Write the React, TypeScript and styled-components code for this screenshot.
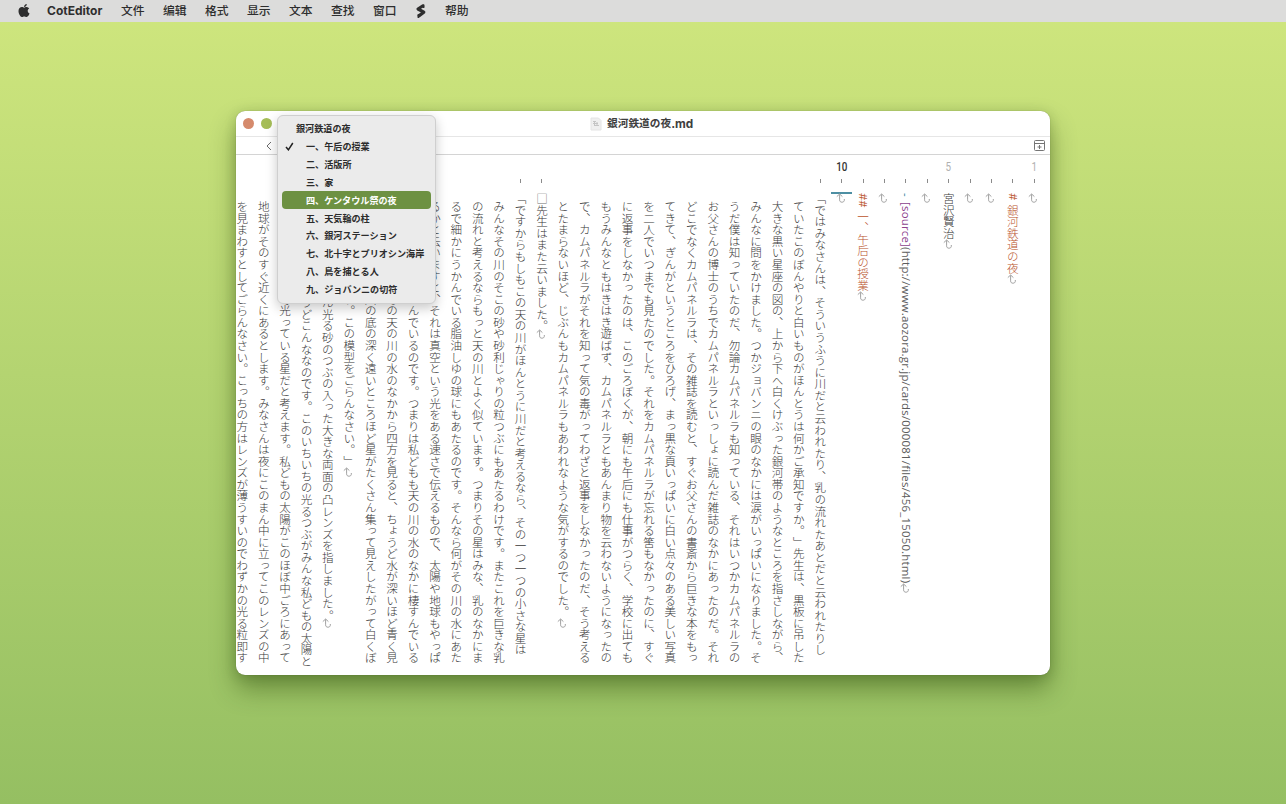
import React from 'react'
import styled, { createGlobalStyle, css } from 'styled-components'
import { FaApple } from 'react-icons/fa'

const GlobalStyle = createGlobalStyle`
  html, body, #root {
    height: 100%;
    margin: 0;
  }
  body {
    overflow: hidden;
    font-family: Inter, 'Noto Sans CJK JP', sans-serif;
    color: #2b2b2b;
  }
`

const Desktop = styled.div`
  height: 804px;
  display: flex;
  flex-direction: column;
  align-items: center;
  background: linear-gradient(#cfe67e, #95bf62);
`

const MenuBar = styled.nav`
  width: 100%;
  height: 22px;
  box-sizing: border-box;
  flex: none;
  display: flex;
  align-items: center;
  padding-left: 17px;
  background: #dcdcdb;
  font-family: Inter, 'Noto Sans CJK SC', sans-serif;
  font-size: 11.8px;
  font-weight: 500;
  color: #2e2e2e;
`

const MenuBarItem = styled.span<{ $bold?: boolean; $icon?: boolean }>`
  padding: 0 9px;
  width: 24px;
  line-height: 20px;
  white-space: nowrap;
  ${(p) =>
    p.$bold &&
    css`
      width: 56px;
      font-size: 12px;
      font-weight: 700;
    `}
  ${(p) =>
    p.$icon &&
    css`
      display: flex;
      width: 12px;
    `}
`

const AppleLogo = styled(FaApple)`
  width: 14px;
  height: 15px;
  margin-right: 7px;
  transform: translateY(-1px);
`

const Window = styled.main`
  width: 814px;
  height: 564px;
  margin-top: 89px;
  border-radius: 9px;
  background: #fff;
  box-shadow: 0 0 1px rgba(0, 0, 0, 0.35), 0 14px 26px rgba(30, 60, 0, 0.42),
    0 2px 12px rgba(30, 60, 0, 0.18);
  display: flex;
  flex-direction: column;
  position: relative;
`

const TitleBar = styled.header`
  height: 25px;
  flex: none;
  display: flex;
  align-items: center;
  padding-left: 7px;
  border-bottom: 1px solid #e6e6e6;
`

const TrafficLight = styled.span<{ $color: string }>`
  width: 11px;
  height: 11px;
  margin-right: 7px;
  border-radius: 50%;
  background: ${(p) => p.$color};
`

const Title = styled.h1`
  flex: 1;
  display: flex;
  align-items: center;
  margin: 0 0 0 311px;
  font-size: 10.7px;
  line-height: 20px;
  font-weight: 700;
  color: #3e3e3e;
  svg {
    margin-right: 5px;
  }
`

const Extension = styled.span`
  font-size: 11.8px;
`

const NavBar = styled.div`
  height: 17px;
  flex: none;
  display: flex;
  align-items: center;
  justify-content: space-between;
  padding: 0 5px 0 30px;
  border-bottom: 1px solid #d4d4d4;
`

const Editor = styled.section`
  flex: 1;
  display: flex;
  flex-direction: row-reverse;
  padding-right: 5px;
  overflow: hidden;
  border-radius: 0 0 9px 9px;
`

const Column = styled.div`
  width: 21.42px;
  flex: none;
  display: flex;
  flex-direction: column;
  align-items: center;
`

const LineNumber = styled.div<{ $active?: boolean }>`
  height: 24px;
  flex: none;
  font-family: Roboto, sans-serif;
  font-size: 12px;
  line-height: 24px;
  transform: scaleX(0.82);
  color: ${(p) => (p.$active ? '#333' : '#b0b0b0')};
  font-weight: ${(p) => (p.$active ? 500 : 400)};
`

const Tick = styled.div<{ $visible: boolean }>`
  width: 1px;
  height: 4px;
  flex: none;
  background: ${(p) => (p.$visible ? '#8b8b8b' : 'transparent')};
`

const Cursor = styled.div<{ $visible: boolean }>`
  width: 21px;
  height: 2px;
  flex: none;
  margin: 9px 0 -1px;
  background: ${(p) => (p.$visible ? '#4d8fa3' : 'transparent')};
`

const LineText = styled.div<{ $wrapped: boolean; $color?: string }>`
  flex: none;
  margin-top: ${(p) => (p.$wrapped ? 8 : 0)}px;
  writing-mode: vertical-rl;
  text-spacing-trim: space-all;
  white-space: pre;
  font-family: 'Noto Sans CJK JP', sans-serif;
  font-size: 11.57px;
  font-weight: 300;
  line-height: 10px;
  color: ${(p) => p.$color || '#383838'};
`

const Latin = styled.span<{ $color?: string; $spacing?: number }>`
  font-family: 'Open Sans', sans-serif;
  font-size: 11.4px;
  font-weight: 400;
  letter-spacing: ${(p) => p.$spacing || 0}px;
  color: ${(p) => p.$color || 'inherit'};
`

const FullWidthSpace = styled.span`
  color: #6e6e6e;
`

const ReturnIcon = styled.svg<{ $tight?: boolean }>`
  width: 10px;
  height: 10px;
  flex: none;
  margin: ${(p) => (p.$tight ? -3 : 0)}px 2px 0 0;
`

const OutlineMenu = styled.div`
  position: absolute;
  left: 41px;
  top: 4px;
  width: 149px;
  padding: 4px 4px 5px;
  border: 1px solid #cfcfcf;
  border-radius: 6px;
  background: #ebebeb;
  box-shadow: 0 4px 12px rgba(0, 0, 0, 0.22);
`

const OutlineItem = styled.div<{ $root?: boolean; $selected?: boolean }>`
  height: 17.84px;
  display: flex;
  align-items: center;
  padding-left: ${(p) => (p.$root ? 14 : 3)}px;
  border-radius: 4px;
  font-family: 'Noto Sans CJK JP', sans-serif;
  font-size: 9.1px;
  font-weight: 700;
  line-height: 17px;
  white-space: nowrap;
  text-spacing-trim: space-all;
  color: ${(p) => (p.$selected ? '#fff' : '#2c2c2c')};
  background: ${(p) => (p.$selected ? '#6d9142' : 'transparent')};
`

const CheckSlot = styled.span`
  width: 21px;
  display: flex;
`

const ReturnMark = ({ tight }: { tight?: boolean }) => (
  <ReturnIcon $tight={tight} viewBox="0 0 10 10" fill="none" stroke="#a0a0a0" strokeWidth="1">
    <path d="M.8 3.6 3.6 1l2.8 2.6M3.6 1.2v5.6c0 1.6.9 2.4 2.3 2.4s2.4-.8 2.4-1.8V6" />
  </ReturnIcon>
)

type Line = {
  text?: string
  node?: React.ReactNode
  number?: number
  wrapped?: boolean
  color?: string
  end?: boolean
}

const heading = '#b9532c'

const lines: Line[] = [
  { number: 1, end: true },
  {
    node: (
      <>
        <Latin $spacing={0.6}># </Latin>銀河鉄道の夜
      </>
    ),
    color: heading,
    end: true,
  },
  { end: true },
  { end: true },
  { number: 5, text: '宮沢賢治', end: true },
  { end: true },
  {
    node: (
      <>
        <Latin $color="#2f7f99" $spacing={1.2}>
          -{' '}
        </Latin>
        <Latin $color="#8c418d" $spacing={0.22}>
          [source]
        </Latin>
        <Latin $color="#5c5c5c" $spacing={0.22}>
          (http://www.aozora.gr.jp/cards/000081/files/456_15050.html)
        </Latin>
      </>
    ),
    end: true,
  },
  { end: true },
  {
    node: (
      <>
        <Latin $spacing={-0.1}>## </Latin>一、午后の授業
      </>
    ),
    color: heading,
    end: true,
  },
  { number: 10, end: true },
  { text: '「ではみなさんは、そういうふうに川だと云われたり、乳の流れたあとだと云われたりし' },
  { wrapped: true, text: 'ていたこのぼんやりと白いものがほんとうは何かご承知ですか。」先生は、黒板に吊した' },
  { wrapped: true, text: '大きな黒い星座の図の、上から下へ白くけぶった銀河帯のようなところを指さしながら、' },
  { wrapped: true, text: 'みんなに問をかけました。つかジョバンニの眼のなかには涙がいっぱいになりました。そ' },
  { wrapped: true, text: 'うだ僕は知っていたのだ、勿論カムパネルラも知っている、それはいつかカムパネルラの' },
  { wrapped: true, text: 'お父さんの博士のうちでカムパネルラといっしょに読んだ雑誌のなかにあったのだ。それ' },
  { wrapped: true, text: 'どこでなくカムパネルラは、その雑誌を読むと、すぐお父さんの書斎から巨きな本をもっ' },
  { wrapped: true, text: 'てきて、ぎんがというところをひろげ、まっ黒な頁いっぱいに白い点々のある美しい写真' },
  { wrapped: true, text: 'を二人でいつまでも見たのでした。それをカムパネルラが忘れる筈もなかったのに、すぐ' },
  { wrapped: true, text: 'に返事をしなかったのは、このごろぼくが、朝にも午后にも仕事がつらく、学校に出ても' },
  { wrapped: true, text: 'もうみんなともはきはき遊ばず、カムパネルラともあんまり物を云わないようになったの' },
  { wrapped: true, text: 'で、カムパネルラがそれを知って気の毒がってわざと返事をしなかったのだ、そう考える' },
  { wrapped: true, text: 'とたまらないほど、じぶんもカムパネルラもあわれなような気がするのでした。', end: true },
  { text: '□先生はまた云いました。', end: true },
  { text: '「ですからもしもこの天の川がほんとうに川だと考えるなら、その一つ一つの小さな星は' },
  { wrapped: true, text: 'みんなその川のそこの砂や砂利じゃりの粒つぶにもあたるわけです。またこれを巨きな乳' },
  { wrapped: true, text: 'の流れと考えるならもっと天の川とよく似ています。つまりその星はみな、乳のなかにま' },
  { wrapped: true, text: 'るで細かにうかんでいる脂油しゆの球にもあたるのです。そんなら何がその川の水にあた' },
  { wrapped: true, text: 'るかと云いますと、それは真空という光をある速さで伝えるもので、太陽や地球もやっぱ' },
  { wrapped: true, text: 'りそのなかに浮うかんでいるのです。つまりは私どもも天の川の水のなかに棲すんでいる' },
  { wrapped: true, text: 'わけです。そしてその天の川の水のなかから四方を見ると、ちょうど水が深いほど青く見' },
  { wrapped: true, text: 'えるように、天の川の底の深く遠いところほど星がたくさん集って見えしたがって白くぼ' },
  { wrapped: true, text: 'んやり見えるのです。この模型をごらんなさい。」', end: true },
  { text: '□先生は中にたくさん光る砂のつぶの入った大きな両面の凸レンズを指しました。', end: true },
  { text: '「天の川の形はちょうどこんななのです。このいちいちの光るつぶがみんな私どもの太陽と' },
  { wrapped: true, text: '同じようにじぶんで光っている星だと考えます。私どもの太陽がこのほぼ中ごろにあって' },
  { wrapped: true, text: '地球がそのすぐ近くにあるとします。みなさんは夜にこのまん中に立ってこのレンズの中' },
  { wrapped: true, text: 'を見まわすとしてごらんなさい。こっちの方はレンズが薄うすいのでわずかの光る粒即す' },
]

const outline = [
  '一、午后の授業',
  '二、活版所',
  '三、家',
  '四、ケンタウル祭の夜',
  '五、天気輪の柱',
  '六、銀河ステーション',
  '七、北十字とプリオシン海岸',
  '八、鳥を捕とる人',
  '九、ジョバンニの切符',
]

const EditorColumn = ({ line }: { line: Line }) => {
  const indented = !!line.text && line.text.startsWith('□')

  return (
    <Column>
      <LineNumber $active={line.number === 10}>{line.number}</LineNumber>
      <Tick $visible={!line.wrapped} />
      <Cursor $visible={line.number === 10} />
      {(line.text || line.node) && (
        <LineText $wrapped={!!line.wrapped} $color={line.color}>
          {indented && <FullWidthSpace>□</FullWidthSpace>}
          {indented ? line.text!.slice(1) : line.text}
          {line.node}
        </LineText>
      )}
      {line.end && <ReturnMark tight={indented} />}
    </Column>
  )
}

const App = () => {
  const [selected, setSelected] = React.useState(3)

  return (
    <>
      <GlobalStyle />
      <Desktop>
        <MenuBar>
          <AppleLogo />
          <MenuBarItem $bold>CotEditor</MenuBarItem>
          {['文件', '编辑', '格式', '显示', '文本', '查找', '窗口'].map((label) => (
            <MenuBarItem key={label}>{label}</MenuBarItem>
          ))}
          <MenuBarItem $icon>
            <svg
              width="12"
              height="16"
              viewBox="0 0 12 16"
              fill="none"
              stroke="#2e2e2e"
              strokeLinecap="round"
              strokeLinejoin="round"
            >
              <path d="M7.6 3 3 6l5.8 3.2L4.2 12.6" strokeWidth="3.2" />
              <path d="M8.6 2.2v2M3.4 11.8v2.4" strokeWidth="1.8" />
            </svg>
          </MenuBarItem>
          <MenuBarItem>帮助</MenuBarItem>
        </MenuBar>

        <Window>
          <TitleBar>
            <TrafficLight $color="#d58a6c" />
            <TrafficLight $color="#a5bd57" />
            <Title>
              <svg width="12" height="14" viewBox="0 0 12 14" fill="none" stroke="#c4c4c4">
                <path d="M1 1h7.5L11 3.5V13H1z" fill="#efefef" stroke="#e4e4e4" />
                <path d="M3 4.5h3M3 6.5h5M4 8.5h5M4.5 4v5M7 5v3.5" />
              </svg>
              銀河鉄道の夜<Extension>.md</Extension>
            </Title>
          </TitleBar>
          <NavBar>
            <svg width="6" height="10" viewBox="0 0 6 10" fill="none" stroke="#6b6b6b">
              <path d="M5 1 1 5l4 4" />
            </svg>
            <svg width="11" height="11" viewBox="0 0 11 11" fill="none" stroke="#757575">
              <rect x=".5" y=".5" width="10" height="10" rx="1" />
              <path d="M.5 3.5h10M5.5 5v4M3.5 7h4" />
            </svg>
          </NavBar>
          <Editor>
            {lines.map((line, index) => (
              <EditorColumn key={index} line={line} />
            ))}
          </Editor>

          <OutlineMenu>
            <OutlineItem $root>銀河鉄道の夜</OutlineItem>
            {outline.map((item, index) => (
              <OutlineItem
                key={item}
                $selected={index === selected}
                onMouseEnter={() => setSelected(index)}
              >
                <CheckSlot>
                  {index === 0 && (
                    <svg width="9" height="9" viewBox="0 0 9 9" fill="none" stroke="#222" strokeWidth="1.5">
                      <path d="m1 5 2.4 2.8L7.8 1" />
                    </svg>
                  )}
                </CheckSlot>
                {item}
              </OutlineItem>
            ))}
          </OutlineMenu>
        </Window>
      </Desktop>
    </>
  )
}

export default App
